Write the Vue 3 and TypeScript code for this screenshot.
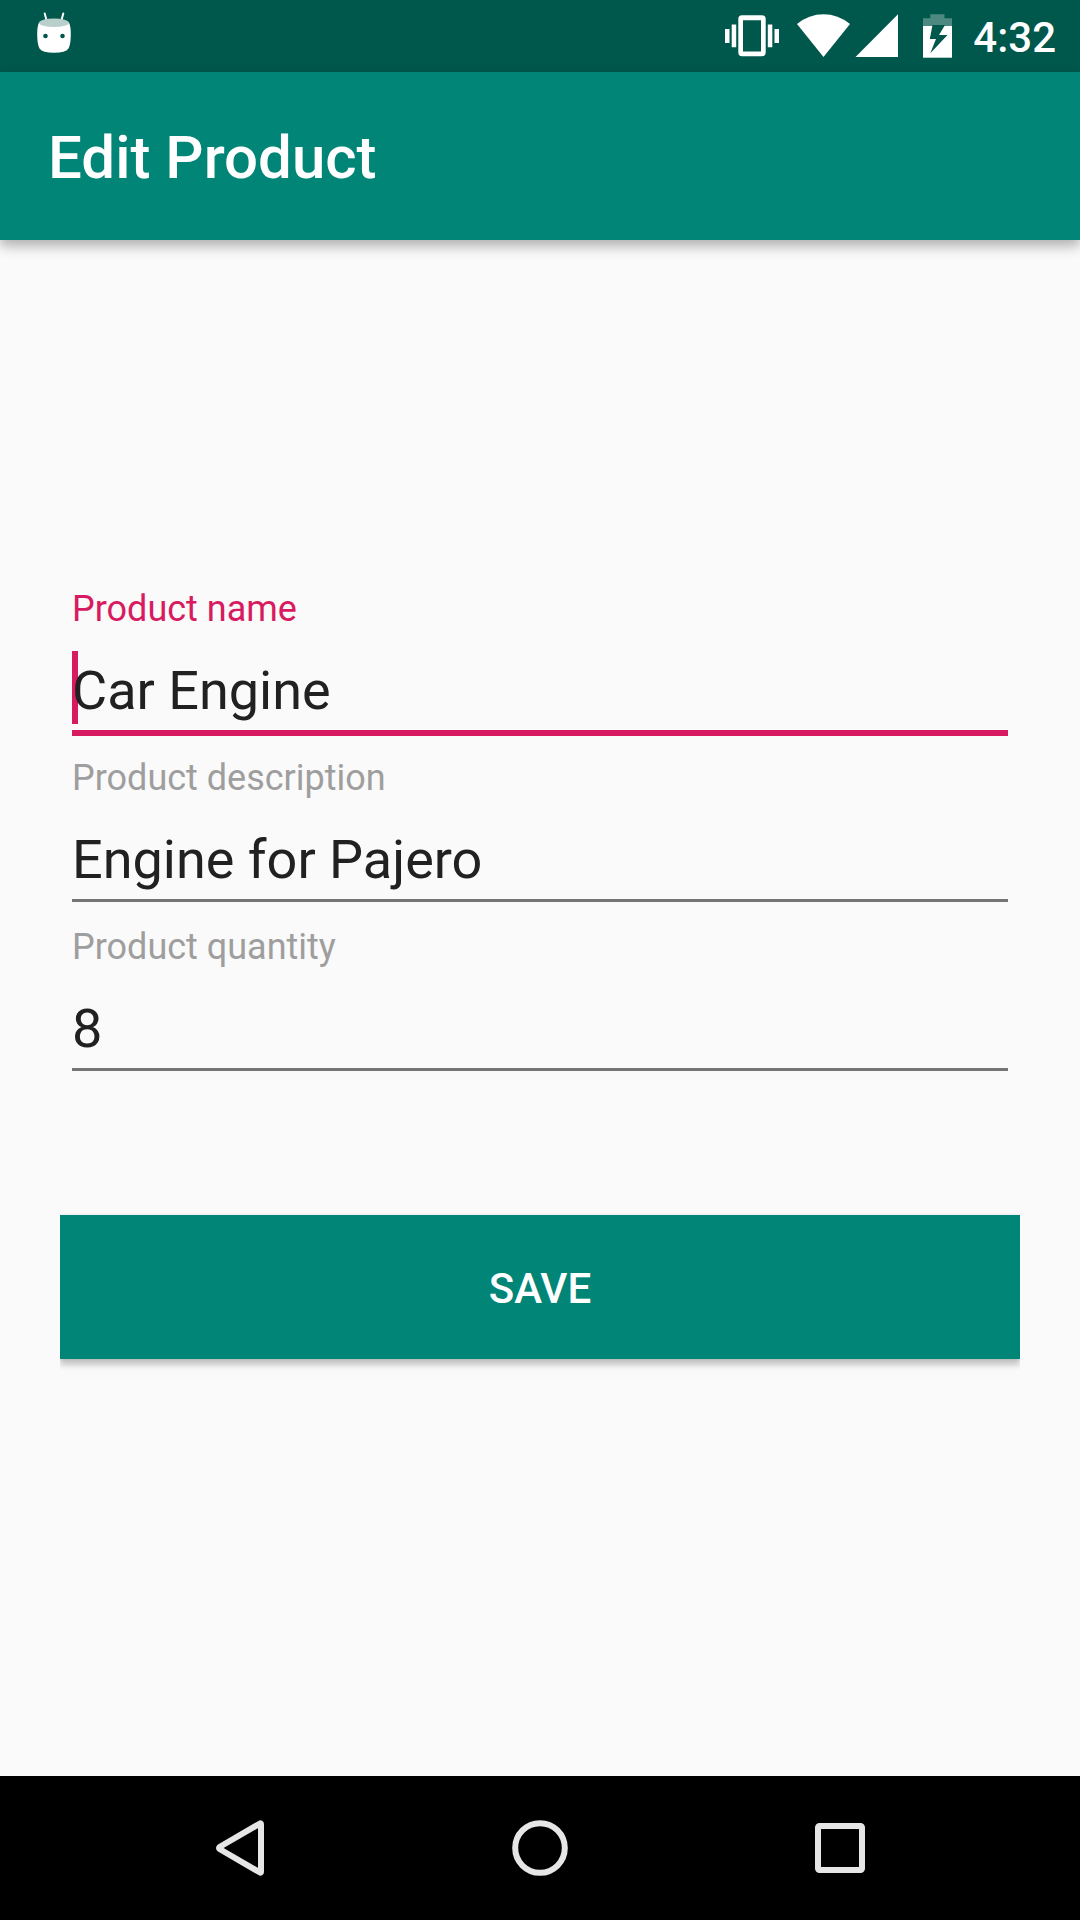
<script setup lang="ts">
import { reactive, ref } from 'vue'

interface Field {
  id: string
  label: string
  value: string
  mode: 'text' | 'numeric'
}

const fields = reactive<Field[]>([
  { id: 'name', label: 'Product name', value: 'Car Engine', mode: 'text' },
  { id: 'description', label: 'Product description', value: 'Engine for Pajero', mode: 'text' },
  { id: 'quantity', label: 'Product quantity', value: '8', mode: 'numeric' },
])

const activeId = ref<string>('name')
</script>

<template>
  <div class="screen">
    <div class="status-bar">
      <svg class="robot" width="36" height="72" viewBox="36 0 36 72" aria-hidden="true">
        <path d="M44.7 13.5 47 22M63.3 13.5 61 22" stroke="#fff" stroke-width="2" stroke-linecap="round" />
        <path d="M39 22.5Q37 27 37.2 35Q37.4 45 39.5 48.5Q42.5 52.8 54 52.8Q65.5 52.8 68.5 48.5Q70.6 45 70.8 35Q71 27 69 22.5Z" fill="#fff" />
        <ellipse cx="54" cy="22.7" rx="15" ry="4.3" fill="#b9cfcc" />
        <circle cx="45.5" cy="36" r="2.3" fill="#00574b" />
        <circle cx="62.5" cy="36" r="2.3" fill="#00574b" />
      </svg>
      <div class="status-icons">
        <svg width="54" height="72" viewBox="725 0 54 72" fill="#fff" aria-hidden="true">
          <path d="M725 29h4.5v14H725zM731.7 24.5h4.5v22.7h-4.5zM767.8 24.5h4.5v22.7h-4.5zM774.5 29h4.5v14h-4.5z" />
          <path fill-rule="evenodd" d="M742 15.3h20a3.7 3.7 0 0 1 3.7 3.7v33.5a3.7 3.7 0 0 1-3.7 3.7h-20a3.7 3.7 0 0 1-3.7-3.7V19a3.7 3.7 0 0 1 3.7-3.7zM743 20.3v31.2h18V20.3z" />
        </svg>
        <svg class="wifi" width="54" height="72" viewBox="796 0 54 72" fill="#fff" aria-hidden="true">
          <path d="M823.5 57 797 24Q809 14.3 823.5 14.3T850 24Z" />
        </svg>
        <svg class="signal" width="43" height="72" viewBox="855 0 43 72" fill="#fff" aria-hidden="true">
          <path d="M855.5 57 898 14.3V57Z" />
        </svg>
        <svg class="battery" width="30" height="72" viewBox="922 0 30 72" aria-hidden="true">
          <path d="M930.3 14.3h14.2v4H952V26h-29v-7.7h7.3z" fill="#fff" fill-opacity=".3" />
          <path d="M923 26h29v31.700h-29z" fill="#fff" />
          <path d="M932.5 25H945L939 35H947.5L930.3 53.2L936 39H929.8Z" fill="#00574b" />
        </svg>
        <span class="clock">4:32</span>
      </div>
    </div>

    <header class="app-bar">
      <h1>Edit Product</h1>
    </header>

    <main>
      <form @submit.prevent>
        <div
          v-for="field in fields"
          :key="field.id"
          class="field"
          :class="{ active: field.id === activeId }"
        >
          <label :for="field.id">{{ field.label }}</label>
          <div class="entry">
            <span v-if="field.id === activeId" class="caret"></span>
            <input
              :id="field.id"
              v-model="field.value"
              type="text"
              :inputmode="field.mode"
              autocomplete="off"
              spellcheck="false"
              @focus="activeId = field.id"
            />
          </div>
        </div>
        <button class="save" type="submit">SAVE</button>
      </form>
    </main>

    <nav class="nav-bar" aria-label="System navigation">
      <button type="button" aria-label="Back">
        <svg width="60" height="60" viewBox="0 0 60 60">
          <path d="M50 5.5 9.500 29Q8.500 30 9.500 31L50 54.500Q51 55 51 54V6Q51 5 50 5.500Z" />
        </svg>
      </button>
      <button type="button" aria-label="Home">
        <svg width="60" height="60" viewBox="0 0 60 60"><circle cx="30" cy="30" r="24.8" /></svg>
      </button>
      <button type="button" aria-label="Recent apps">
        <svg width="60" height="60" viewBox="0 0 60 60">
          <rect x="8" y="8" width="44" height="44" rx="1.5" />
        </svg>
      </button>
    </nav>
  </div>
</template>

<style>
body {
  margin: 0;
  background: #fafafa;
}
</style>

<style scoped>
.screen {
  display: flex;
  flex-direction: column;
  min-height: 100vh;
  background: #fafafa;
  color: #212121;
  font-family: Roboto, "Noto Sans", sans-serif;
}

svg {
  display: block;
  flex: none;
}

button {
  border: 0;
  font-family: inherit;
}

.status-bar {
  display: flex;
  justify-content: space-between;
  height: 72px;
  padding: 0 24px 0 36px;
  background: #00574b;
  color: #fff;
}

.status-icons {
  display: flex;
}

.wifi {
  margin-left: 17px;
}

.signal {
  margin-left: 5px;
}

.battery {
  margin-left: 24px;
}

.clock {
  margin-left: 21px;
  font-size: 42px;
  font-weight: 500;
  line-height: 76px;
}

.app-bar {
  display: flex;
  align-items: center;
  box-sizing: border-box;
  height: 168px;
  padding: 4px 48px 0;
  background: #008577;
  color: #fff;
  box-shadow: 0 6px 12px rgba(0, 0, 0, 0.3);
}

h1 {
  margin: 0;
  font-size: 60px;
  font-weight: 500;
  line-height: 70px;
}

main {
  display: flex;
  flex: 1;
  flex-direction: column;
  justify-content: center;
  padding: 0 60px 90px;
}

form {
  display: flex;
  flex-direction: column;
}

.field {
  margin: 0 12px;
  padding-top: 18px;
}

label {
  display: block;
  color: #9e9e9e;
  font-size: 36px;
  line-height: 48px;
}

.active label {
  color: #d81b60;
}

.entry {
  position: relative;
  height: 103px;
}

.caret {
  position: absolute;
  top: 18px;
  left: 0;
  width: 6px;
  height: 73px;
  background: #d81b60;
}

input {
  position: relative;
  display: block;
  box-sizing: border-box;
  width: 100%;
  height: 100px;
  padding: 18px 0 0;
  border: 0;
  border-bottom: 3px solid #757575;
  border-radius: 0;
  outline: 0;
  background: transparent;
  color: #212121;
  font-family: inherit;
  font-size: 54px;
}

.active input {
  height: 103px;
  border-bottom: 6px solid #d81b60;
}

.save {
  height: 144px;
  margin-top: 141px;
  padding: 2px 0 0;
  background: #008577;
  color: #fff;
  font-size: 42px;
  font-weight: 500;
  box-shadow: 0 6px 6px rgba(0, 0, 0, 0.22), 0 0 3px rgba(0, 0, 0, 0.1);
  clip-path: inset(-24px 0);
}

.nav-bar {
  display: grid;
  grid-template-columns: repeat(3, 1fr);
  height: 144px;
  padding: 0 90px;
  background: #000;
}

.nav-bar button {
  display: flex;
  align-items: center;
  justify-content: center;
  padding: 0;
  background: transparent;
}

.nav-bar svg {
  fill: none;
  stroke: #e6e6e6;
  stroke-width: 6;
  stroke-linejoin: round;
}
</style>
